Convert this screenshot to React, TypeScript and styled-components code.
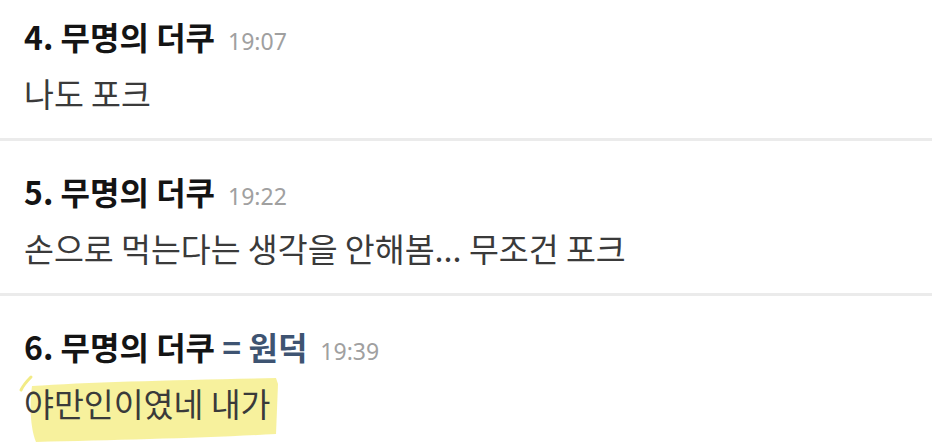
import styled, { createGlobalStyle } from 'styled-components'

const GlobalStyle = createGlobalStyle`
  html, body {
    margin: 0;
    padding: 0;
    background: #fff;
  }
  body {
    font-family: 'Noto Sans CJK KR', 'Noto Sans', sans-serif;
    overflow: hidden;
  }
`

const List = styled.ul`
  list-style: none;
  margin: -14px 0 0;
  padding: 0;
  width: 932px;
`

const Item = styled.li`
  padding: 28px 0 23px 24px;
  border-bottom: 3px solid #ebebeb;

  &:last-child {
    border-bottom: none;
  }
`

const Header = styled.div`
  display: flex;
  align-items: baseline;
  gap: 13px;
  height: 44px;
  line-height: 44px;
`

const Name = styled.span`
  font-size: 32px;
  font-weight: 700;
  color: #141414;
`

const Alias = styled.span`
  color: #3e5472;
`

const Time = styled.span`
  font-family: 'Noto Sans', 'Lato', sans-serif;
  font-size: 23px;
  color: #a0a0a0;
`

const Body = styled.div`
  position: relative;
  margin-top: 13px;
  font-size: 32.5px;
  line-height: 44px;
  color: #3a3a3a;
`

const Marked = styled.span`
  position: relative;
  display: inline-block;
`

const Highlight = styled.svg`
  position: absolute;
  left: -6px;
  top: -7px;
  width: 264px;
  height: 70px;
  z-index: 0;
  pointer-events: none;
`

const MarkedText = styled.span`
  position: relative;
  z-index: 1;
`

type Comment = {
  no: number
  alias?: string
  time: string
  text: string
  marked?: boolean
}

const comments: Comment[] = [
  { no: 4, time: '19:07', text: '나도 포크' },
  { no: 5, time: '19:22', text: '손으로 먹는다는 생각을 안해봄... 무조건 포크' },
  { no: 6, alias: '원덕', time: '19:39', text: '야만인이였네 내가', marked: true },
]

export default function App() {
  return (
    <>
      <GlobalStyle />
      <List>
        {comments.map((c) => (
          <Item key={c.no}>
            <Header>
              <Name>
                {c.no}. 무명의 더쿠
                {c.alias && <Alias> = {c.alias}</Alias>}
              </Name>
              <Time>{c.time}</Time>
            </Header>
            <Body>
              {c.marked ? (
                <Marked>
                  <Highlight viewBox='0 0 264 70'>
                    <path
                      d='M14 12 C70 8 160 6 258 4 L260 10 L258 60 C190 64 100 66 18 68 C13 56 11 34 14 12 Z'
                      fill='#f6ef8c'
                      opacity='0.85'
                    />
                    <path
                      d='M3 16 C6 10 9 7 13 3'
                      stroke='#f2eb86'
                      strokeWidth='3'
                      strokeLinecap='round'
                      fill='none'
                    />
                  </Highlight>
                  <MarkedText>{c.text}</MarkedText>
                </Marked>
              ) : (
                c.text
              )}
            </Body>
          </Item>
        ))}
      </List>
    </>
  )
}
